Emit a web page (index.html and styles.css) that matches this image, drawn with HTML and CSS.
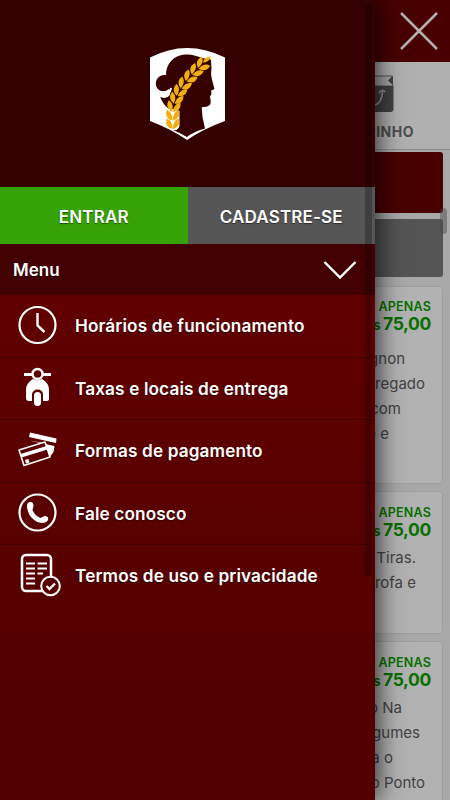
FILE: index.html
```html
<!DOCTYPE html>
<html lang="pt-BR">
<head>
<meta charset="utf-8">
<meta name="viewport" content="width=device-width, initial-scale=1">
<title>Menu</title>
<link rel="stylesheet" href="styles.css">
</head>
<body>
<div class="app">
  <div class="page">
    <header class="topbar">
      <svg class="close" width="40" height="40" viewBox="0 0 40 40"><path d="M2 2 38 38M38 2 2 38" fill="none" stroke="#b5b0b0" stroke-width="2.500"/></svg>
    </header>
    <nav class="tabs">
      <div class="tab">
        <svg class="bag" width="37" height="38" viewBox="0 0 37 38"><path d="M0 1H35.500L32 5.500 36 10V11H0Z" fill="#a8a8a8" stroke="#555" stroke-width="1"/><path d="M36 1V10L31 5.500Z" fill="#444"/><path d="M0 11H36.500V34Q36.500 37 33.500 37H3Q0 37 0 34Z" fill="#424242"/><path d="M7 17Q9 30 17 30 25 29 25.500 16M22 18Q25 13 28 17" fill="none" stroke="#999" stroke-width="1.500"/></svg>
        <span>CARRINHO</span>
      </div>
    </nav>
    <main class="content">
      <div class="banner red"></div>
      <div class="banner gray"></div>
      <article class="card tall first">
        <div class="label">APENAS</div><div class="price"><small>R$</small><small class="unit">s</small> 75,00</div>
        <div class="desc"><p class="r404">Mignon</p><p class="r425">agregado</p><p class="r400">com</p><p class="r389">o e</p></div>
      </article>
      <article class="card short">
        <div class="label">APENAS</div><div class="price"><small>R$</small><small class="unit">s</small> 75,00</div>
        <div class="desc"><p class="r416">em Tiras.</p><p class="r416">Farofa e</p></div>
      </article>
      <article class="card tall">
        <div class="label">APENAS</div><div class="price"><small>R$</small><small class="unit">s</small> 75,00</div>
        <div class="desc"><p class="r402">o Na</p><p class="r420">Legumes</p><p class="r392">a o</p><p class="r425">o Ponto</p></div>
      </article>
    </main>
    <i class="page-scroll"></i>
  </div>

  <aside class="drawer">
    <div class="brand">
      <svg width="77" height="94" viewBox="0 0 77 94">
        <defs><path id="leaves" d="M-.4 5C-6.500 3-7.500-1-6-5.500-1.500-4 0 0-.4 5ZM.4 5C6.500 3 7.500-1 6-5.500 1.500-4 0 0 .4 5Z"/></defs>
        <path d="M1 10.500Q38-8.500 76 10.500V74Q54 82 38 93 22 82 1 74Z" fill="#fff"/>
        <path d="M17 28C17 16 25 9 34 7.700 42 6.500 48 9 53 11L62 12.700 62.500 22C61 29 64 35 65.500 42L62 43.700 62.500 47 61 49.500 61.700 54C62 58 60 60 52.700 60.300L53.500 70 56 81.500Q44 85 38 90 31 86 24 83L30 78V66L28 62 20.300 62Q14 58 11 49.500 17 53 21 48L20 42Q15 46 10 43C4 38 7 27 17 28Z" fill="#340000"/>
        <path d="M11 49Q20 51 22 41" fill="none" stroke="#fff" stroke-width="2"/>
        <path d="M16 64H30.500V79Q29 84 24 83L16 79Z" fill="#fff"/>
        <g fill="#efb010">
          <use href="#leaves" transform="translate(23.700 77)"/>
          <use href="#leaves" transform="translate(23.700 68.500)"/>
          <use href="#leaves" transform="translate(24.500 60) rotate(12)"/>
          <use href="#leaves" transform="translate(27 52) rotate(20)"/>
          <use href="#leaves" transform="translate(30.500 44.500) rotate(27)"/>
          <use href="#leaves" transform="translate(35 37.500) rotate(34)"/>
          <use href="#leaves" transform="translate(40.500 30.500) rotate(40)"/>
          <use href="#leaves" transform="translate(46.500 24) rotate(44)"/>
          <use href="#leaves" transform="translate(53 18) rotate(47)"/>
          <path d="M54 15.500Q55 9.500 62 9.500 60 15.500 54 15.500Z"/>
        </g>
      </svg>
    </div>
    <div class="auth"><a class="enter">ENTRAR</a><a class="join">CADASTRE-SE</a></div>
    <div class="heading"><span>Menu</span>
      <svg width="34" height="20" viewBox="0 0 34 20"><path d="M1.500 2 17 17.500 32.500 2" fill="none" stroke="#fff" stroke-width="2.400"/></svg>
    </div>
    <ul class="menu">
      <li><svg viewBox="0 0 46 46"><circle cx="22.500" cy="22" r="18" fill="none" stroke="#fff" stroke-width="2.200"/><path d="M22.500 10V22.500L29.500 29" fill="none" stroke="#fff" stroke-width="2.400"/></svg><span>Horários de funcionamento</span></li>
      <li><svg viewBox="0 0 46 46"><path d="M9 9.500H17M28 9.500H36" stroke="#fff" stroke-width="3"/><circle cx="22.500" cy="9" r="5" fill="none" stroke="#fff" stroke-width="2.500"/><path d="M18 14Q22.500 16.500 27 14 34 18 34 25V34Q34 36 31 36H28V29Q27.500 24.500 22.500 24.500 18 24.500 17 29V36H14Q11 36 11 33V25Q11 18 18 14Z" fill="#fff"/><rect x="19" y="27" width="7" height="14" rx="3.500" fill="#fff"/></svg><span>Taxas e locais de entrega</span></li>
      <li><svg viewBox="0 0 46 46"><path d="M15 4.500 41.500 10.500 41 15 14 9Z" fill="#fff"/><path d="M14 12.500 39.500 18 38.500 24 35.500 28 33 27 30 15Z" fill="#fff"/><path d="M4 22 30 14 35 29 9 37.500Z" fill="#5b0000" stroke="#fff" stroke-width="1.600" stroke-linejoin="round"/><path d="M5.500 26 31.500 18 32.500 21.500 6.500 29.500Z" fill="#fff"/><path d="M10 32 13.500 31 14.500 34.500 11 35.500Z" fill="#fff"/></svg><span>Formas de pagamento</span></li>
      <li><svg viewBox="0 0 46 46"><circle cx="22.500" cy="22.500" r="18" fill="none" stroke="#fff" stroke-width="2.200"/><path d="M12 16Q12 12 15.500 12 18.500 12 18.500 16L17.500 20Q20 26 25.500 28L29.500 26Q34 26 33 30 31.500 33 27 33 19 32 14.500 25 12 20 12 16Z" fill="#fff"/></svg><span>Fale conosco</span></li>
      <li><svg viewBox="0 0 46 46"><rect x="7" y="2" width="29" height="36" rx="4" fill="none" stroke="#fff" stroke-width="2.500"/><path d="M11 10.500H20M22.500 10.500H32M11 15.500H20M22.500 15.500H32M11 20.500H20M22.500 20.500H28M11 25.500H20M11 30.500H20" stroke="#fff" stroke-width="2.200"/><circle cx="35.500" cy="33" r="9.300" fill="#590000" stroke="#fff" stroke-width="2"/><path d="M31.500 33 34.500 36 40 30.500" fill="none" stroke="#fff" stroke-width="2.400"/></svg><span>Termos de uso e privacidade</span></li>
    </ul>
    <i class="drawer-scroll"></i>
  </aside>
</div>
</body>
</html>
```
FILE: styles.css
```css
* { box-sizing: border-box; }
body { margin: 0; font-family: Inter, "Liberation Sans", sans-serif; }
.app { position: relative; width: 450px; height: 800px; overflow: hidden; }
.page { position: relative; height: 800px; overflow: hidden; background: #a8a8a8; }
.topbar { height: 62px; padding: 11px 11px 0 0; background: #480000; display: flex; justify-content: flex-end; }
.tabs { height: 88px; padding-top: 13px; background: #b0b0b0; border-bottom: 1px solid #8b8b8b; display: flex; justify-content: flex-end; }
.tab { width: 150px; padding-right: 1px; display: flex; flex-direction: column; align-items: center; font-size: 14px; line-height: 18px; font-weight: 700; color: #4d4d4d; gap: 10px; }
.tab span { align-self: flex-end; margin-right: 35px; letter-spacing: .5px; }
.bag { display: block; margin-left: 1px; }
.content { padding: 2px 7px 0 0; }
.banner { border-radius: 3px; }
.red { height: 61px; background: #480000; }
.gray { height: 58px; margin: 6px 0 9px; background: #545454; }
.card { margin-bottom: 7px; padding: 13px 11px 0; background: #b2b2b2; border: 1px solid #9f9f9f; border-radius: 4px; text-align: right; }
.first { padding-top: 12px; }
.tall { height: 198px; }
.short { height: 143px; }
.label { font-size: 12.5px; line-height: 16px; font-weight: 600; letter-spacing: .2px; color: #087000; }
.price { font-size: 17.5px; line-height: 18px; font-weight: 700; letter-spacing: -.35px; color: #087000; white-space: nowrap; }
.price small { font-size: 13px; }
.price .unit { margin-right: -1px; }
.desc { margin-top: 5px; font-size: 15px; line-height: 25px; color: #444; }
.first .desc { margin-top: 12px; }
.desc p { margin: 0; white-space: nowrap; }
.r389 { padding-right: 42px; }
.r392 { padding-right: 38px; }
.r400 { padding-right: 30px; }
.r402 { padding-right: 29px; }
.r404 { padding-right: 26px; }
.r416 { padding-right: 15px; }
.r420 { padding-right: 11px; }
.r425 { padding-right: 6px; }
.page-scroll { position: absolute; left: 440px; top: 208px; width: 7px; height: 26px; border-radius: 4px; background: rgba(70,70,70,.45); }
.drawer { position: absolute; inset: 0 75px 0 0; background: linear-gradient(#680000, #600000 40%, #500000); box-shadow: 0 0 26px rgba(0,0,0,.9); }
.brand { height: 187px; display: flex; justify-content: center; padding-top: 47px; background: #340000; }
.auth { display: grid; grid-template-columns: 1fr 1fr; height: 57px; color: #fff; font-size: 17px; font-weight: 600; letter-spacing: .15px; }
.auth a { display: flex; align-items: center; justify-content: center; padding-top: 2px; }
.enter { background: #35a205; }
.join { background: #555; }
.heading { height: 51px; padding: 0 18px 0 13px; display: flex; align-items: center; justify-content: space-between; background: #420000; color: #fff; font-size: 17px; font-weight: 600; }
.menu { list-style: none; margin: 0; padding: 0; }
.menu li { height: 62.5px; padding-left: 15px; display: flex; align-items: center; gap: 14px; border-bottom: 1px solid #430000; color: #fff; font-size: 17.2px; font-weight: 600; letter-spacing: .13px; }
.menu li:last-child { border-bottom: 0; }
.menu li:last-child span { margin-top: -1px; }
.menu svg { width: 46px; height: 46px; flex: none; }
.heading span, .menu span, .auth a { text-shadow: 0 1px 1px rgba(0,0,0,.5); }
.drawer-scroll { position: absolute; right: 3px; top: 3px; width: 7px; height: 573px; border-radius: 4px; background: rgba(0,0,0,.25); }
```
